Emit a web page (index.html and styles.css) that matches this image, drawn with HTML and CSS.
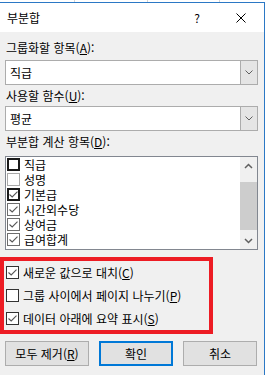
FILE: index.html
```html
<!DOCTYPE html>
<html lang="ko">
<head>
    <meta charset="UTF-8">
    <meta name="viewport" content="width=device-width, initial-scale=1.0">
    <title>부분합</title>
    <link rel="stylesheet" href="styles.css">
</head>
<body>
    <div class="sheet">
        <span class="cell c1"></span>
        <span class="cell c2"></span>
        <span class="cell c3"></span>
    </div>

    <div class="dialog">
        <div class="titlebar">
            <span class="title">부분합</span>
            <span class="help">?</span>
            <svg class="close" width="10" height="10" viewBox="0 0 10 10">
                <path d="M0.5 0.5 L9.5 9.5 M9.5 0.5 L0.5 9.5" stroke="#000" stroke-width="1" fill="none"/>
            </svg>
        </div>

        <div class="content">
            <div class="label">그룹화할 항목(<u>A</u>):</div>
            <div class="combo">
                <span class="combo-value">직급</span>
                <span class="combo-btn">
                    <svg width="8" height="5" viewBox="0 0 8 5"><path d="M0.5 0.5 L4 4 L7.5 0.5" stroke="#606060" fill="none"/></svg>
                </span>
            </div>

            <div class="label label-2">사용할 함수(<u>U</u>):</div>
            <div class="combo combo-2">
                <span class="combo-value">평균</span>
                <span class="combo-btn">
                    <svg width="8" height="5" viewBox="0 0 8 5"><path d="M0.5 0.5 L4 4 L7.5 0.5" stroke="#606060" fill="none"/></svg>
                </span>
            </div>

            <div class="label label-3">부분합 계산 항목(<u>D</u>):</div>
            <div class="listbox">
                <div class="items">
                    <div class="item"><span class="check focus"></span>직급</div>
                    <div class="item"><span class="check light"></span>성명</div>
                    <div class="item"><span class="check focus"><svg width="9" height="7" viewBox="0 0 9 7"><path d="M0.5 3.5 L3.2 6 L8.5 0.7" stroke="#555" stroke-width="1.1" fill="none"/></svg></span>기본급</div>
                    <div class="item"><span class="check"><svg width="9" height="7" viewBox="0 0 9 7"><path d="M0.5 3.5 L3.2 6 L8.5 0.7" stroke="#555" stroke-width="1.1" fill="none"/></svg></span>시간외수당</div>
                    <div class="item"><span class="check"><svg width="9" height="7" viewBox="0 0 9 7"><path d="M0.5 3.5 L3.2 6 L8.5 0.7" stroke="#555" stroke-width="1.1" fill="none"/></svg></span>상여금</div>
                    <div class="item"><span class="check"><svg width="9" height="7" viewBox="0 0 9 7"><path d="M0.5 3.5 L3.2 6 L8.5 0.7" stroke="#555" stroke-width="1.1" fill="none"/></svg></span>급여합계</div>
                </div>
                <div class="scrollbar">
                    <div class="arrow">
                        <svg width="9" height="6" viewBox="0 0 9 6"><path d="M1 5 L4.5 1.5 L8 5" stroke="#606060" stroke-width="1.5" fill="none"/></svg>
                    </div>
                    <div class="thumb"></div>
                    <div class="track"></div>
                    <div class="arrow">
                        <svg width="9" height="6" viewBox="0 0 9 6"><path d="M1 1 L4.5 4.5 L8 1" stroke="#606060" stroke-width="1.5" fill="none"/></svg>
                    </div>
                </div>
            </div>

            <div class="options">
                <div class="opt"><span class="check dark"><svg width="9" height="7" viewBox="0 0 9 7"><path d="M0.5 3.5 L3.2 6 L8.5 0.7" stroke="#555" stroke-width="1.1" fill="none"/></svg></span>새로운 값으로 대치(<u>C</u>)</div>
                <div class="opt"><span class="check dark"></span>그룹 사이에서 페이지 나누기(<u>P</u>)</div>
                <div class="opt"><span class="check dark"><svg width="9" height="7" viewBox="0 0 9 7"><path d="M0.5 3.5 L3.2 6 L8.5 0.7" stroke="#555" stroke-width="1.1" fill="none"/></svg></span>데이터 아래에 요약 표시(<u>S</u>)</div>
                <div class="annot"></div>
            </div>

            <div class="buttons">
                <button class="btn btn-remove">모두 제거(<u>R</u>)</button>
                <button class="btn btn-ok">확인</button>
                <button class="btn btn-cancel">취소</button>
            </div>
        </div>
    </div>
</body>
</html>
```

FILE: styles.css
```css
:root {
    --border-blue: #2b78c5;
    --dialog-bg: #f0f0f0;
    --field-border: #acacac;
    --btn-bg: #e1e1e1;
    --btn-border: #adadad;
    --focus-blue: #0078d7;
    --annot-red: #ed1c24;
}

* {
    margin: 0;
    padding: 0;
    box-sizing: border-box;
}

body {
    width: 265px;
    height: 375px;
    overflow: hidden;
    background-color: #ffffff;
    font-family: "Noto Sans CJK KR", "Noto Sans", sans-serif;
    font-size: 12px;
    color: #000000;
}

.sheet {
    display: flex;
    height: 2px;
}

.cell {
    height: 2px;
    border-right: 1px solid #d4d4d4;
}

.c1 { width: 75px; }
.c2 { width: 73px; }
.c3 { width: 72px; }

.dialog {
    height: 373px;
    background-color: var(--dialog-bg);
    border-top: 1px solid var(--border-blue);
    border-right: 1px solid var(--border-blue);
}

.titlebar {
    display: flex;
    align-items: center;
    height: 29px;
    padding-left: 7px;
    background-color: #ffffff;
}

.title {
    line-height: 16px;
}

.help {
    width: 10px;
    margin-left: auto;
    text-align: center;
    line-height: 16px;
}

.close {
    margin-left: 34px;
    margin-right: 18px;
}

.content {
    padding: 8px 6px 0 5px;
}

.label {
    height: 16px;
    line-height: 16px;
    padding-left: 1px;
}

.label-2 { margin-top: 3px; }
.label-3 { margin-top: 3px; }

.combo {
    display: flex;
    height: 25px;
    margin-top: 4px;
    background-color: #ffffff;
    border: 1px solid var(--field-border);
}

.combo-2 {
    margin-top: 2px;
}

.combo-value {
    flex: 1;
    padding-left: 4px;
    line-height: 23px;
}

.combo-btn {
    display: flex;
    align-items: center;
    justify-content: center;
    width: 17px;
    background-color: #e5e5e5;
    border-left: 1px solid var(--field-border);
}

.listbox {
    display: flex;
    height: 94px;
    margin-top: 6px;
    background-color: #ffffff;
    border: 1px solid #828790;
}

.items {
    flex: 1;
}

.item {
    display: flex;
    align-items: center;
    height: 15px;
    padding-left: 1px;
    line-height: 15px;
}

.check {
    display: flex;
    align-items: center;
    justify-content: center;
    flex-shrink: 0;
    width: 13px;
    height: 13px;
    margin-right: 4px;
    background-color: #ffffff;
    border: 1px solid #6d6d6d;
}

.check.light {
    border-color: #a9a9a9;
}

.check.focus {
    border: 2px solid #1a1a1a;
}

.check.dark {
    border-color: #333333;
}

.scrollbar {
    display: flex;
    flex-direction: column;
    width: 17px;
    background-color: var(--dialog-bg);
}

.arrow {
    display: flex;
    align-items: center;
    justify-content: center;
    height: 17px;
}

.thumb {
    height: 48px;
    margin-top: 8px;
    background-color: #cdcdcd;
}

.track {
    flex: 1;
}

.options {
    position: relative;
    margin-top: 11px;
}

.opt {
    display: flex;
    align-items: center;
    height: 23px;
    padding-left: 1px;
}

/* red annotation frame drawn over the options */
.annot {
    position: absolute;
    top: -4px;
    left: -5px;
    width: 213px;
    height: 77px;
    border: 4px solid var(--annot-red);
}

.buttons {
    display: flex;
    margin-top: 11px;
}

.btn {
    display: flex;
    align-items: center;
    justify-content: center;
    height: 25px;
    background-color: var(--btn-bg);
    border: 1px solid var(--btn-border);
    font-family: inherit;
    font-size: 12px;
    color: #000000;
}

.btn-remove {
    width: 84px;
}

.btn-ok {
    width: 74px;
    margin-left: 10px;
    border: 2px solid var(--focus-blue);
}

.btn-cancel {
    width: 74px;
    margin-left: 10px;
}
```
